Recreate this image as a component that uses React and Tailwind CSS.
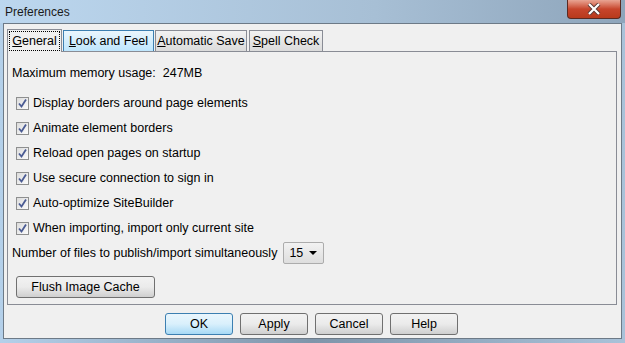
import React, { useState } from 'react';

const options = [
  'Display borders around page elements',
  'Animate element borders',
  'Reload open pages on startup',
  'Use secure connection to sign in',
  'Auto-optimize SiteBuilder',
  'When importing, import only current site',
];

function CheckBox({ checked, onClick }) {
  return (
    <span
      onClick={onClick}
      className="w-[13px] h-[13px] border border-[#8e8f8f] bg-gradient-to-br from-[#dcdcdc] to-[#fbfbfb] flex items-center justify-center shrink-0"
    >
      {checked && (
        <svg width="11" height="11" viewBox="0 0 11 11">
          <path d="M2 5.5 L4.5 8.5 L9 1.5" fill="none" stroke="#4a5b93" strokeWidth="1.8" />
        </svg>
      )}
    </span>
  );
}

function Tab({ first, rest, active, hover, w }) {
  if (active) {
    return (
      <div className={`${w} h-[23px] border border-b-0 border-[#898c95] bg-[#f0f0f0] p-[1px] relative z-10 -mb-px`}>
        <div className="h-full border border-dotted border-black flex items-center justify-center whitespace-nowrap">
          <span><u>{first}</u>{rest}</span>
        </div>
      </div>
    );
  }
  const bg = hover
    ? 'bg-gradient-to-b from-[#eaf6fd] to-[#bee6fd] border-[#3c7fb1]'
    : 'bg-gradient-to-b from-[#f2f2f2] to-[#dbdbdb] border-[#898c95]';
  return (
    <div className={`${w} h-[21px] border border-b-0 ${bg} flex items-center justify-center whitespace-nowrap`}>
      <span><u>{first}</u>{rest}</span>
    </div>
  );
}

function Button({ children, primary, w }) {
  const look = primary
    ? 'border-[#3c7fb1] bg-gradient-to-b from-[#eaf6fd] via-[#d9f0fc] to-[#a7d9f5]'
    : 'border-[#707070] bg-gradient-to-b from-[#f2f2f2] via-[#ebebeb] to-[#cfcfcf]';
  return (
    <button className={`${w} h-[22px] border rounded-[3px] ${look} text-[12.5px] text-black flex items-center justify-center`}>
      {children}
    </button>
  );
}

export default function App() {
  const [checks, setChecks] = useState(options.map(() => true));

  return (
    <div
      className="w-[625px] h-[343px] overflow-hidden flex flex-col bg-gradient-to-r from-[#b4d0ea] via-[#7f95aa] to-[#a9c2d9] text-black"
      style={{ fontFamily: '"Liberation Sans", Arial, sans-serif' }}
    >
      <div className="h-[23px] flex items-start shrink-0 bg-gradient-to-r from-[#bcd7ef] via-[#a7bfd5] via-60% to-[#8ea5bb]">
        <span className="pl-[5px] pt-[3px] text-[12px] text-[#1a1a1a]">Preferences</span>
        <div className="ml-auto mr-[4px] w-[54px] h-[19px] rounded-b-[4px] border border-t-0 border-[#5a2a22] bg-gradient-to-b from-[#e8a493] via-[#c7452c] to-[#b83a1c] flex items-center justify-center">
          <svg width="14" height="12" viewBox="0 0 14 12">
            <path d="M2 1 L12 11 M12 1 L2 11" stroke="#5a3a36" strokeWidth="4" />
            <path d="M2 1 L12 11 M12 1 L2 11" stroke="#ffffff" strokeWidth="2.2" />
          </svg>
        </div>
      </div>

      <div className="flex-1 mx-[3px] mb-[4px] border border-[#6d7a87] bg-[#f0f0f0] flex flex-col text-[12.5px]">
        <div className="flex items-end gap-[1px] pl-[3px] pt-[5px]">
          <Tab first="G" rest="eneral" active w="w-[55px]" />
          <Tab first="L" rest="ook and Feel" hover w="w-[91px]" />
          <Tab first="A" rest="utomatic Save" w="w-[92px]" />
          <Tab first="S" rest="pell Check" w="w-[74px] ml-[1px]" />
        </div>

        <div className="ml-[3px] mr-[4px] h-[254px] border border-[#898c95] bg-[#f0f0f0] flex flex-col pl-[4px] pt-[14px]">
          <div className="h-[15px] leading-[15px]">Maximum memory usage:&nbsp;&nbsp;247MB</div>
          <div className="mt-[10px] flex flex-col">
            {options.map((label, i) => (
              <label key={label} className="h-[25px] flex items-center gap-[4px] pl-[4px]">
                <CheckBox
                  checked={checks[i]}
                  onClick={() => setChecks(checks.map((c, j) => (j === i ? !c : c)))}
                />
                <span>{label}</span>
              </label>
            ))}
          </div>
          <div className="h-[24px] flex items-center">
            <span>Number of files to publish/import simultaneously</span>
            <div className="ml-[6px] w-[41px] h-[22px] border border-[#acacac] rounded-[2px] bg-gradient-to-b from-[#f2f2f2] to-[#dedede] flex items-center pl-[5px]">
              <span>15</span>
              <svg className="ml-auto mr-[6px]" width="8" height="4" viewBox="0 0 8 4">
                <path d="M0 0 H8 L4 4 Z" fill="#000" />
              </svg>
            </div>
          </div>
          <div className="mt-[11px] pl-[4px]">
            <Button w="w-[139px]">Flush Image Cache</Button>
          </div>
        </div>

        <div className="flex gap-[7px] pl-[161px] pt-[8px]">
          <Button primary w="w-[68px]">OK</Button>
          <Button w="w-[68px]">Apply</Button>
          <Button w="w-[68px]">Cancel</Button>
          <Button w="w-[68px]">Help</Button>
        </div>
      </div>
    </div>
  );
}
